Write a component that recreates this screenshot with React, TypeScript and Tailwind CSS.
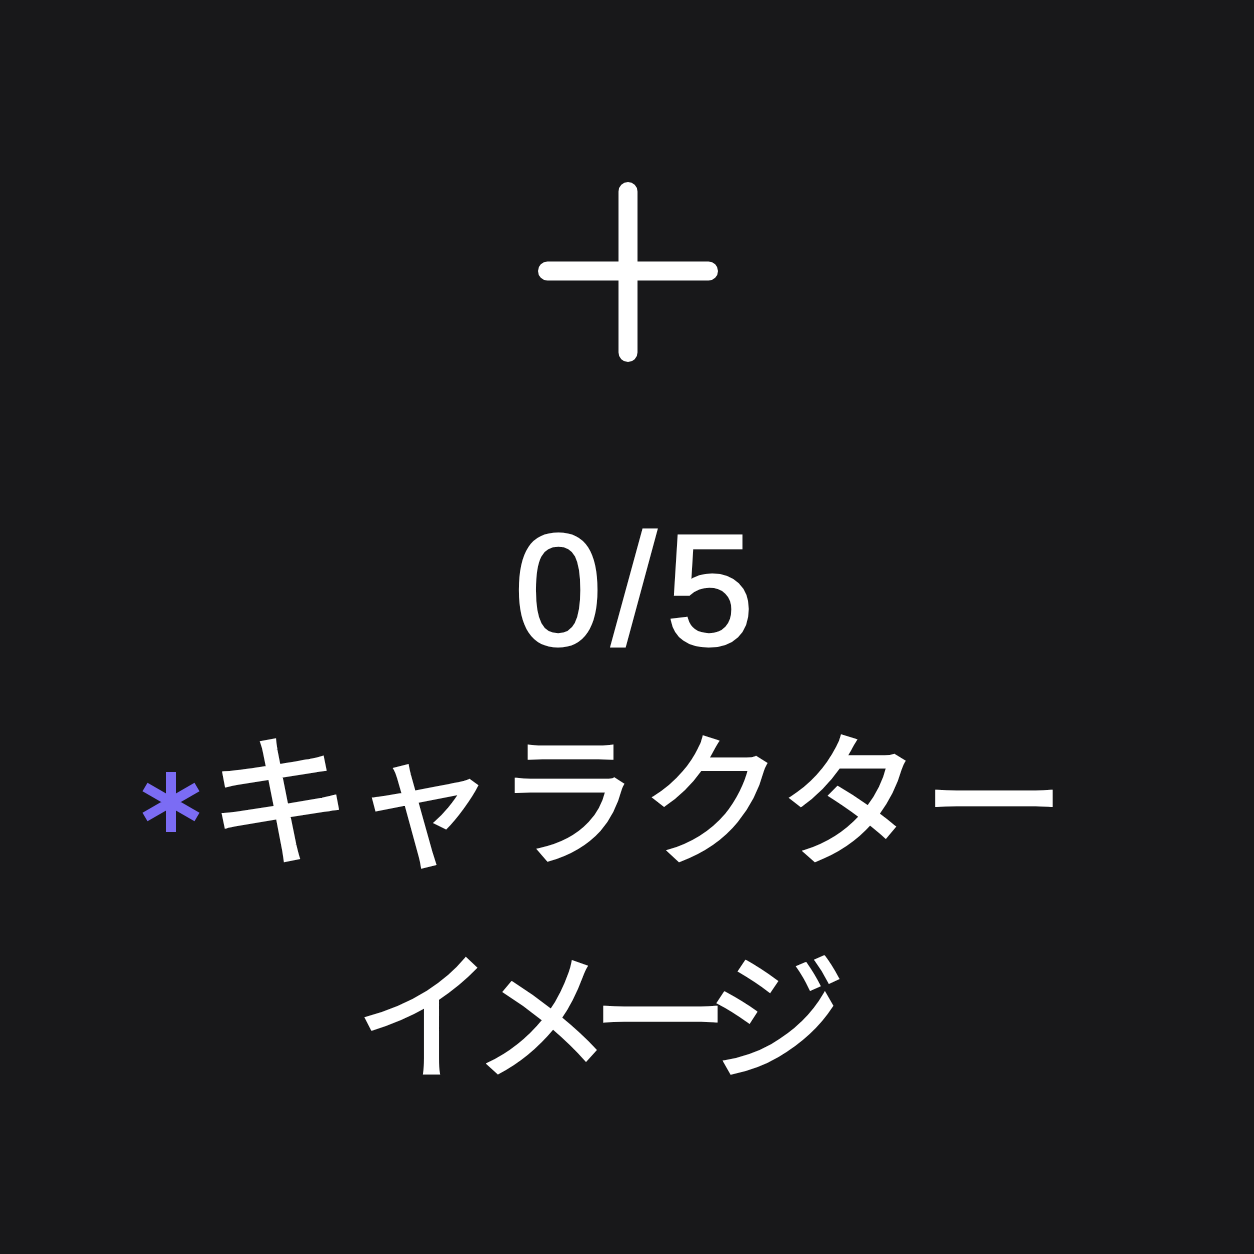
export default function App() {
  return (
    <div className="flex h-[1254px] w-full flex-col items-center bg-[#18181a] pt-[182px] text-white">
      <svg width="180" height="180" viewBox="0 0 180 180" className="ml-[2px]">
        <path d="M90 9.5V170.5M9.5 89H170.5" stroke="white" strokeWidth="19" strokeLinecap="round" fill="none" />
      </svg>
      <div className="mt-[148px] ml-[24px] font-['Liberation_Sans',sans-serif] text-[158px] leading-none tracking-[10px] [-webkit-text-stroke:3px_white]">
        0/5
      </div>
      <div className="mt-[15px] mr-[54px] flex flex-col items-center font-['Noto_Sans_CJK_JP',sans-serif] leading-[216px] [-webkit-text-stroke:3px_white]">
        <div className="ml-[7px] flex items-center text-[144px]">
          <svg width="60" height="62" viewBox="0 0 60 62" className="mr-[7px] translate-y-[11px]">
            <path d="M30 1V61M4 16L56 46M4 46L56 16" stroke="#7b6cf4" strokeWidth="10" fill="none" />
          </svg>
          <span>キャラクター</span>
        </div>
        <div className="mr-[22px] text-[140px] tracking-[-22px]">イメージ</div>
      </div>
    </div>
  );
}
